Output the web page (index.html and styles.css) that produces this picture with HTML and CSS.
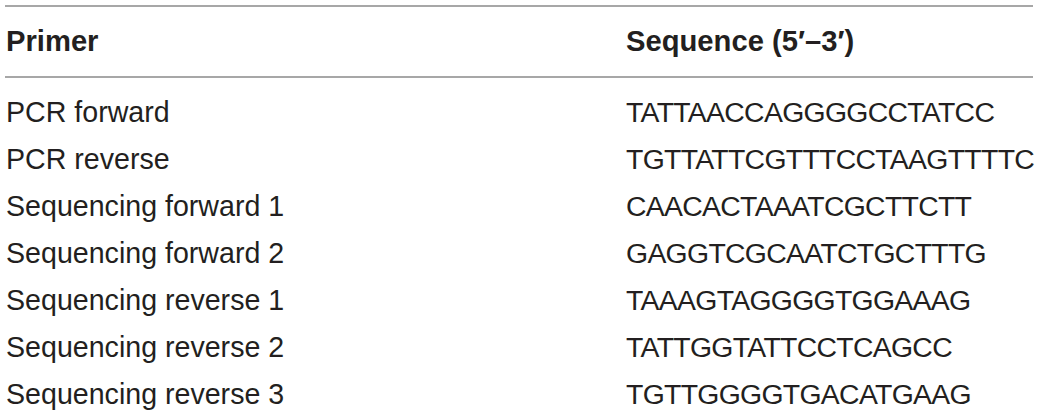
FILE: index.html
```html
<!DOCTYPE html>
<html>
<head>
<meta charset="utf-8">
<link rel="stylesheet" href="styles.css">
</head>
<body>
<div class="table">
  <div class="row head">
    <div class="cell c1">Primer</div>
    <div class="cell c2">Sequence (5′–3′)</div>
  </div>
  <div class="body">
    <div class="row"><div class="cell c1">PCR forward</div><div class="cell c2">TATTAACCAGGGGCCTATCC</div></div>
    <div class="row"><div class="cell c1">PCR reverse</div><div class="cell c2">TGTTATTCGTTTCCTAAGTTTTC</div></div>
    <div class="row"><div class="cell c1">Sequencing forward 1</div><div class="cell c2">CAACACTAAATCGCTTCTT</div></div>
    <div class="row"><div class="cell c1">Sequencing forward 2</div><div class="cell c2">GAGGTCGCAATCTGCTTTG</div></div>
    <div class="row"><div class="cell c1">Sequencing reverse 1</div><div class="cell c2">TAAAGTAGGGGTGGAAAG</div></div>
    <div class="row"><div class="cell c1">Sequencing reverse 2</div><div class="cell c2">TATTGGTATTCCTCAGCC</div></div>
    <div class="row"><div class="cell c1">Sequencing reverse 3</div><div class="cell c2">TGTTGGGGTGACATGAAG</div></div>
  </div>
</div>
</body>
</html>
```
FILE: styles.css
```css
html, body {
  margin: 0;
  padding: 0;
  background: #ffffff;
}
body {
  font-family: "Liberation Sans", Arial, sans-serif;
  color: #231f20;
  overflow: hidden;
}
.table {
  margin: 5px 0 0 5px;
  width: 1028px;
  border-top: 2px solid #a7a7a7;
}
.row {
  display: grid;
  grid-template-columns: 620px 1fr;
  align-items: center;
  height: 47px;
  font-size: 28.6px;
  white-space: nowrap;
}
.row.head {
  height: 69px;
  font-size: 29.2px;
  font-weight: bold;
  border-bottom: 2px solid #a7a7a7;
}
.cell.c1 {
  padding-left: 1px;
}
.cell.c2 {
  padding-left: 1px;
}
.body .cell.c2 {
  font-size: 28.4px;
  letter-spacing: -0.7px;
}
.body {
  padding-top: 11px;
}
```
